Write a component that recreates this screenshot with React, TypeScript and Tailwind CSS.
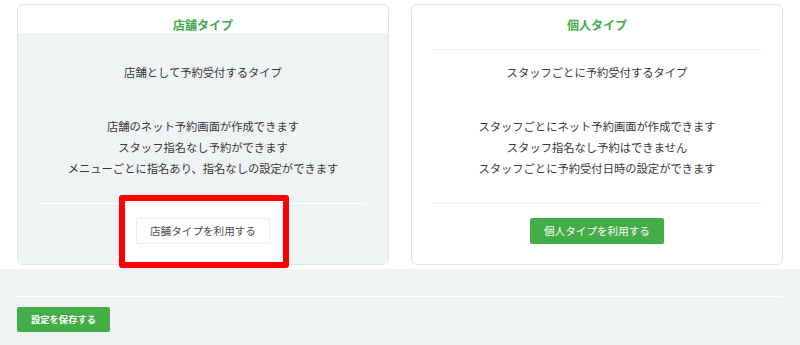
import React from 'react';

type Plan = {
  title: string;
  lead: string;
  points: string[];
  action: string;
  selected: boolean;
};

const plans: Plan[] = [
  {
    title: '店舗タイプ',
    lead: '店舗として予約受付するタイプ',
    points: [
      '店舗のネット予約画面が作成できます',
      'スタッフ指名なし予約ができます',
      'メニューごとに指名あり、指名なしの設定ができます',
    ],
    action: '店舗タイプを利用する',
    selected: true,
  },
  {
    title: '個人タイプ',
    lead: 'スタッフごとに予約受付するタイプ',
    points: [
      'スタッフごとにネット予約画面が作成できます',
      'スタッフ指名なし予約はできません',
      'スタッフごとに予約受付日時の設定ができます',
    ],
    action: '個人タイプを利用する',
    selected: false,
  },
];

function PlanCard({ plan }: { plan: Plan }) {
  return (
    <div className="relative rounded-[6px] border border-[#dfe4e6] bg-white">
      <div className="h-[28px] pt-[12px] text-center">
        <h3 className="text-[12px] leading-[16px] font-bold text-[#3fab48]">{plan.title}</h3>
      </div>
      <div className={plan.selected ? 'rounded-b-[6px] bg-[#f0f3f4] px-[22px] pt-[16px] pb-[20px]' : 'px-[21px] pt-[16px] pb-[20px]'}>
        <div className={plan.selected ? 'border-t border-transparent' : 'border-t border-[#eceff0]'} />
        <div className="pt-[12px] text-center text-[11.3px] leading-[21px] text-[#383838]">
          <p>{plan.lead}</p>
          <div className="mt-[33px] mb-[24px]">
            {plan.points.map((pt) => (
              <p key={pt}>{pt}</p>
            ))}
          </div>
        </div>
        <div className={plan.selected ? 'border-t border-white' : 'border-t border-[#eceff0]'} />
        <div className="relative mt-[14px] flex justify-center">
          {plan.selected && (
            <div className="absolute left-[79px] top-[-23px] h-[73px] w-[170px] rounded-[3px] border-[6px] border-[#ff0000] bg-white" />
          )}
          <button
            className={
              plan.selected
                ? 'relative z-10 h-[26px] w-[134px] rounded-[2px] border border-[#eceff0] bg-white text-[10.6px] text-[#4a4a4a]'
                : 'relative z-10 h-[26px] w-[134px] rounded-[2px] bg-[#43ad48] text-[10.6px] text-white'
            }
          >
            {plan.action}
          </button>
        </div>
      </div>
    </div>
  );
}

export default function App() {
  return (
    <div className="h-[345px] w-[800px] overflow-hidden bg-white font-['Noto_Sans_CJK_JP',sans-serif]">
      <section className="px-[17px] pt-[4px] pb-[4px]">
        <div className="grid grid-cols-2 gap-[22px]">
          {plans.map((p) => (
            <PlanCard key={p.title} plan={p} />
          ))}
        </div>
      </section>
      <section className="h-[76px] bg-[#f0f3f4] px-[17px] pt-[27px]">
        <div className="mr-[1px] border-t border-white" />
        <button className="mt-[10px] h-[25px] w-[93px] rounded-[2px] bg-[#43ad48] text-[9.3px] font-bold text-white">
          設定を保存する
        </button>
      </section>
    </div>
  );
}
